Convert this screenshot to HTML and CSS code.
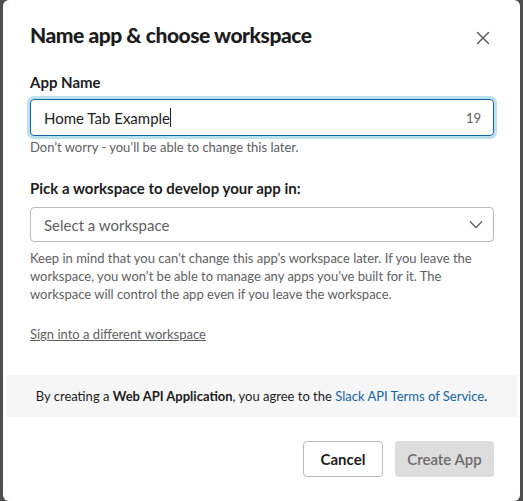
FILE: index.html
```html
<!DOCTYPE html>
<html>
<head>
<meta charset="utf-8">
<link rel="stylesheet" href="styles.css">
</head>
<body>
<div class="modal">
  <div class="header">
    <h1 class="title">Name app &amp; choose workspace</h1>
    <button class="close" aria-label="Close">
      <svg width="14" height="14" viewBox="0 0 14 14"><path d="M1.5 1.5 L12.5 12.5 M12.5 1.5 L1.5 12.5" stroke="#5e5d60" stroke-width="1.5" fill="none" stroke-linecap="round"/></svg>
    </button>
  </div>
  <div class="body">
    <label class="label first">App Name</label>
    <div class="input focused">
      <span class="value">Home Tab Example</span><span class="caret"></span>
      <span class="count">19</span>
    </div>
    <p class="help">Don’t worry - you’ll be able to change this later.</p>

    <label class="label second">Pick a workspace to develop your app in:</label>
    <div class="select">
      <span class="placeholder">Select a workspace</span>
      <svg class="chev" width="14" height="9" viewBox="0 0 14 9"><path d="M1 1.5 L7 7.5 L13 1.5" stroke="#5e5d60" stroke-width="1.3" fill="none"/></svg>
    </div>
    <p class="note">Keep in mind that you can’t change this app’s workspace later. If you leave the workspace, you won’t be able to manage any apps you’ve built for it. The workspace will control the app even if you leave the workspace.</p>
    <a class="signin" href="#">Sign into a different workspace</a>
  </div>
  <div class="terms"><span>By creating a <b>Web API Application</b>, you agree to the <a href="#">Slack API Terms of Service</a>.</span></div>
  <div class="footer">
    <button class="btn cancel">Cancel</button>
    <button class="btn create">Create App</button>
  </div>
</div>
</body>
</html>
```
FILE: styles.css
```css
html, body {
  margin: 0;
  padding: 0;
  height: 501px;
  overflow: hidden;
}
body {
  background: #4f4f4f;
  font-family: Lato, "Open Sans", sans-serif;
  color: #1d1c1d;
}
.modal {
  margin: 0 3px;
  width: 517px;
  height: 501px;
  background: #fff;
  border-radius: 6px;
  box-sizing: border-box;
  display: flex;
  flex-direction: column;
}
.header {
  display: flex;
  align-items: center;
  justify-content: space-between;
  padding: 20px 26px 0 27px;
}
.title {
  margin: 0;
  font-size: 21px;
  line-height: 30px;
  font-weight: 900;
  letter-spacing: -0.45px;
}
.close {
  border: 0;
  background: none;
  padding: 0;
  width: 14px;
  height: 14px;
  margin-right: 4px;
  margin-top: 6px;
  display: flex;
}
.body {
  padding: 0 26px 0 27px;
  display: flex;
  flex-direction: column;
  align-items: flex-start;
}
.label {
  font-size: 15px;
  line-height: 22px;
  font-weight: 700;
}
.label.first { margin-top: 21px; }
.label.second { margin-top: 21px; }
.input {
  margin-top: 6px;
  align-self: stretch;
  height: 37px;
  box-sizing: border-box;
  border: 1px solid #1264a3;
  border-radius: 4px;
  box-shadow: 0 0 0 3px rgba(29, 155, 209, 0.3);
  display: flex;
  align-items: center;
  padding: 0 12px 0 13px;
  font-size: 15px;
}
.caret {
  display: inline-block;
  width: 1px;
  height: 19px;
  background: #1d1c1d;
}
.count {
  margin-left: auto;
  color: #616061;
  font-size: 13px;
}
.help {
  margin: 2px 0 0;
  font-size: 13px;
  line-height: 18px;
  color: #616061;
}
.select {
  margin-top: 8px;
  align-self: stretch;
  height: 35px;
  box-sizing: border-box;
  border: 1px solid #bbbabb;
  border-radius: 4px;
  display: flex;
  align-items: center;
  padding: 0 10px 0 13px;
  font-size: 15px;
}
.placeholder { color: #616061; }
.chev { margin-left: auto; }
.note {
  margin: 7px 0 0;
  font-size: 13px;
  line-height: 18px;
  color: #616061;
}
.signin {
  margin-top: 22px;
  font-size: 13px;
  line-height: 18px;
  color: #616061;
}
.terms {
  margin: 32px 3px 0;
  height: 42px;
  background: #f6f6f6;
  display: flex;
  align-items: center;
  justify-content: center;
  font-size: 13px;
  color: #1d1c1d;
}
.terms a {
  color: #1264a3;
  text-decoration: none;
}
.footer {
  display: flex;
  justify-content: flex-end;
  gap: 12px;
  padding: 24px 26px 0 0;
}
.btn {
  height: 36px;
  border-radius: 4px;
  font-family: Lato, "Open Sans", sans-serif;
  font-size: 15px;
  font-weight: 700;
  padding: 0;
  box-sizing: border-box;
  white-space: nowrap;
}
.cancel {
  width: 80px;
  background: #fff;
  border: 1px solid #bbbabb;
  color: #1d1c1d;
}
.create {
  width: 99px;
  background: #dddddd;
  border: 0;
  color: #6b6a6b;
  font-weight: 600;
}
```
